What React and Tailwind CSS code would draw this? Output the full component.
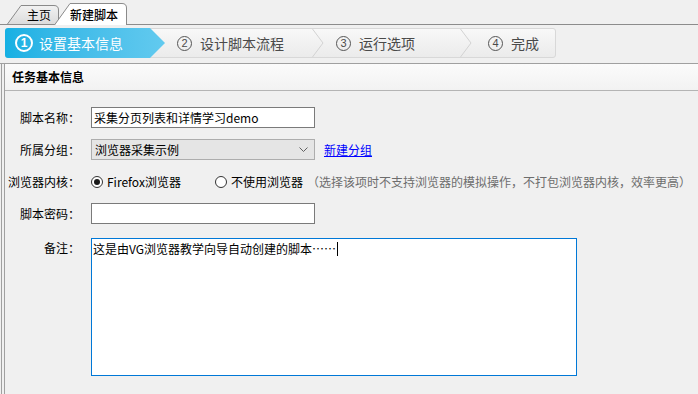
import React from 'react'

const font = "font-['Noto_Sans_CJK_SC','Noto_Sans',sans-serif]"

function Chevron() {
  return (
    <svg className="w-[12px] h-[28px] shrink-0" viewBox="0 0 12 28">
      <polyline points="0.5,0 11,14 0.5,28" fill="none" stroke="#d2d2d2" strokeWidth="1" />
    </svg>
  )
}

function Num({ n }) {
  return (
    <span className="w-[15px] h-[15px] rounded-full border-[1.5px] border-[#555] flex items-center justify-center text-[11px] leading-none font-['Liberation_Sans',sans-serif] shrink-0">
      {n}
    </span>
  )
}

function Row({ label, children, className = '' }) {
  return (
    <div className={'flex items-center h-[21px] ' + className}>
      <div className="w-[75px] text-right leading-[21px] shrink-0">{label}</div>
      <div className="ml-[11px] flex items-center">{children}</div>
    </div>
  )
}

function Radio({ checked }) {
  return (
    <span className="w-[12px] h-[12px] rounded-full border border-[#333] bg-white flex items-center justify-center shrink-0">
      {checked && <span className="w-[6px] h-[6px] rounded-full bg-[#1a1a1a]" />}
    </span>
  )
}

export default function App() {
  return (
    <div className={'w-[698px] h-[394px] overflow-hidden bg-[#f0f0f0] text-[12px] text-black ' + font}>
      {/* tab bar */}
      <div className="h-[25px] flex items-end border-b border-[#8c8c8c]">
        <div className="relative ml-[7px] w-[52px] h-[20px] shrink-0">
          <svg className="absolute inset-0" width="52" height="20" viewBox="0 0 52 20">
            <defs>
              <linearGradient id="t1" x1="0" y1="0" x2="0" y2="1">
                <stop offset="0" stopColor="#f2f2f2" />
                <stop offset="1" stopColor="#dcdcdc" />
              </linearGradient>
            </defs>
            <path d="M0.5 20 L14 1.5 L47 1.5 Q51.5 1.5 51.5 6 L51.5 20" fill="url(#t1)" stroke="#8a8a8a" />
          </svg>
          <span className="relative pl-[20px] leading-[20px] block pt-[1px]">主页</span>
        </div>
        <div className="relative -ml-[5px] w-[73px] h-[22px] -mb-px z-10 shrink-0">
          <svg className="absolute inset-0" width="73" height="22" viewBox="0 0 73 22">
            <path d="M0.5 22 L16 0.5 L68 0.5 Q72.5 0.5 72.5 5 L72.5 22" fill="#ffffff" stroke="#8a8a8a" />
          </svg>
          <span className="relative pl-[16px] leading-[22px] block pt-[1px] font-medium">新建脚本</span>
        </div>
      </div>

      {/* stepper */}
      <div className="pt-[3px] pb-[5px] px-[5px] border-b border-[#a0a0a0]">
        <div className="w-[551px] h-[30px] flex rounded-[3px] border border-[#d8d8d8] bg-linear-to-b from-[#f8f8f8] to-[#ebebeb] text-[14px] text-[#4a4a4a]">
          <div className="-ml-px -my-px h-[30px] w-[160px] shrink-0 rounded-l-[3px] bg-linear-to-r from-[#15b0e3] to-[#62caef] text-white flex items-center pl-[10px] [clip-path:polygon(0_0,145px_0,160px_50%,145px_100%,0_100%)]">
            <span className="w-[18px] h-[18px] rounded-full border-2 border-white flex items-center justify-center text-[12px] leading-none font-['Liberation_Sans',sans-serif] font-bold shrink-0">1</span>
            <span className="ml-[6px] leading-[20px]">设置基本信息</span>
          </div>
          <div className="w-[147px] shrink-0 flex items-center pl-[12px]">
            <Num n="2" />
            <span className="ml-[8px] leading-[20px]">设计脚本流程</span>
          </div>
          <Chevron />
          <div className="w-[136px] shrink-0 flex items-center pl-[12px]">
            <Num n="3" />
            <span className="ml-[8px] leading-[20px]">运行选项</span>
          </div>
          <Chevron />
          <div className="flex-1 flex items-center pl-[16px]">
            <Num n="4" />
            <span className="ml-[8px] leading-[20px]">完成</span>
          </div>
        </div>
      </div>

      {/* body with double left border */}
      <div className="ml-[1px] border-l border-[#a0a0a0] pl-[2px]">
        <div className="border-l border-[#a0a0a0] h-[330px]">
          <div className="h-[27px] border-b border-[#b4b4b4] bg-linear-to-b from-[#fbfbfb] to-[#f2f2f2] flex items-center pl-[7px] font-bold leading-[26px]">
            任务基本信息
          </div>

          <div className="pt-[16px]">
            <Row label="脚本名称：">
              <div className="w-[224px] h-[21px] border border-[#7a7a7a] bg-white pl-[2px] leading-[19px]">
                采集分页列表和详情学习demo
              </div>
            </Row>

            <Row label="所属分组：" className="mt-[11px]">
              <div className="w-[224px] h-[21px] border border-[#adadad] bg-[#e5e5e5] pl-[3px] pr-[6px] flex items-center justify-between">
                <span className="leading-[19px]">浏览器采集示例</span>
                <svg width="9" height="5" viewBox="0 0 9 5">
                  <polyline points="0.5,0.5 4.5,4.5 8.5,0.5" fill="none" stroke="#606060" strokeWidth="1" />
                </svg>
              </div>
              <a href="#" className="ml-[9px] text-[#0000ff] underline leading-[19px]">新建分组</a>
            </Row>

            <Row label="浏览器内核：" className="mt-[11px]">
              <div className="w-[124px] flex items-center">
                <Radio checked />
                <span className="ml-[4px] leading-[19px]">Firefox浏览器</span>
              </div>
              <Radio />
              <span className="ml-[4px] leading-[19px]">不使用浏览器</span>
              <span className="ml-[4px] leading-[19px] text-[#6d6d6d] whitespace-nowrap">（选择该项时不支持浏览器的模拟操作，不打包浏览器内核，效率更高）</span>
            </Row>

            <Row label="脚本密码：" className="mt-[11px]">
              <div className="w-[224px] h-[21px] border border-[#7a7a7a] bg-white" />
            </Row>

            <div className="flex items-start mt-[14px]">
              <div className="w-[75px] text-right leading-[20px] shrink-0">备注：</div>
              <div className="ml-[11px] w-[486px] h-[138px] border border-[#0078d7] bg-white pl-[1px] pt-[3px] leading-[14px] flex items-start">
                <span>这是由VG浏览器教学向导自动创建的脚本……</span>
                <span className="ml-[1px] w-px h-[14px] bg-black" />
              </div>
            </div>
          </div>
        </div>
      </div>
    </div>
  )
}
